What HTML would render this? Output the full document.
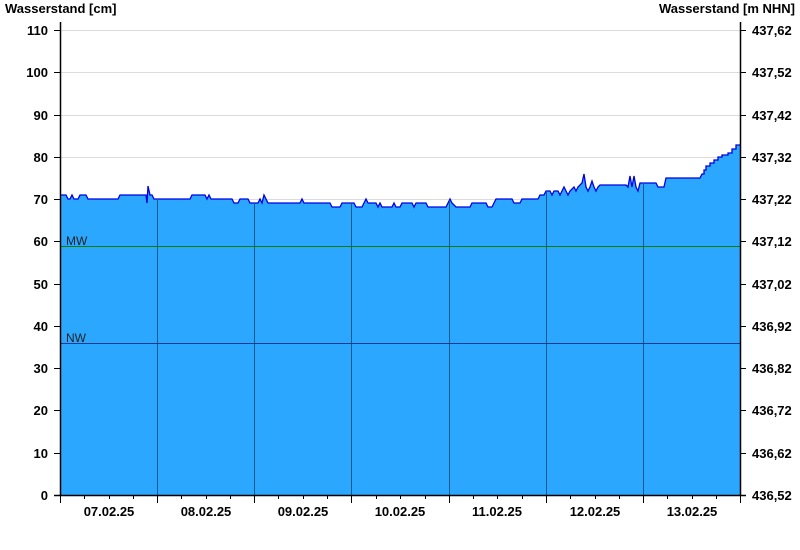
<!DOCTYPE html>
<html><head><meta charset="utf-8"><style>
html,body{margin:0;padding:0;background:#fff;width:800px;height:550px;overflow:hidden}
svg text{font-family:"Liberation Sans",Arial,sans-serif;font-size:13px;font-weight:bold;fill:#000}
</style></head><body>
<svg width="800" height="550" viewBox="0 0 800 550" xmlns="http://www.w3.org/2000/svg">
<defs>
<clipPath id="c"><polygon id="fp" points="60,495 60,195 66,195 68,199 70,199 72,195 74,199 78,199 80,195 86,195 88,199 118,199 120,195 146,195 147,203 148,186 150,195 152,195 154,199 190,199 192,195 205,195 207,199 209,195 211,199 232,199 234,203 238,203 240,199 248,199 250,203 258,203 260,199 262,203 264,195 266,199 268,203 300,203 302,199 304,203 330,203 332,207 340,207 342,203 354,203 356,207 362,207 364,203 366,199 368,203 376,203 378,207 380,203 382,207 392,207 394,203 396,207 400,207 402,203 412,203 414,207 416,203 426,203 428,207 446,207 448,203 450,199 452,203 456,207 470,207 472,203 486,203 488,207 492,207 494,203 496,199 512,199 514,203 520,203 522,199 538,199 540,195 544,195 546,191 550,191 552,195 554,191 558,191 560,195 562,191 564,187 566,191 568,195 570,191 574,187 576,191 578,187 582,183 584,174 586,187 588,191 590,187 592,181 594,187 596,191 598,187 600,185 626,185 628,187 630,176 632,187 634,176 636,187 638,191 640,183 656,183 658,187 664,187 666,178 700,178 702,174 704,174 704,170 706,170 706,166 710,166 710,163 714,163 714,160 718,160 718,157 722,157 722,155 728,155 728,153 732,153 732,149 736,149 736,145 740,145 740,495"/></clipPath>
</defs>
<g stroke="#dcdcdc" stroke-width="1">
<line x1="60" x2="740" y1="30.5" y2="30.5"/><line x1="60" x2="740" y1="72.5" y2="72.5"/><line x1="60" x2="740" y1="115.5" y2="115.5"/><line x1="60" x2="740" y1="157.5" y2="157.5"/><line x1="60" x2="740" y1="199.5" y2="199.5"/>
</g>
<use href="#fp" fill="#2ba7ff"/>
<polyline fill="none" stroke="#0000e0" stroke-width="1.3" points="60,195 66,195 68,199 70,199 72,195 74,199 78,199 80,195 86,195 88,199 118,199 120,195 146,195 147,203 148,186 150,195 152,195 154,199 190,199 192,195 205,195 207,199 209,195 211,199 232,199 234,203 238,203 240,199 248,199 250,203 258,203 260,199 262,203 264,195 266,199 268,203 300,203 302,199 304,203 330,203 332,207 340,207 342,203 354,203 356,207 362,207 364,203 366,199 368,203 376,203 378,207 380,203 382,207 392,207 394,203 396,207 400,207 402,203 412,203 414,207 416,203 426,203 428,207 446,207 448,203 450,199 452,203 456,207 470,207 472,203 486,203 488,207 492,207 494,203 496,199 512,199 514,203 520,203 522,199 538,199 540,195 544,195 546,191 550,191 552,195 554,191 558,191 560,195 562,191 564,187 566,191 568,195 570,191 574,187 576,191 578,187 582,183 584,174 586,187 588,191 590,187 592,181 594,187 596,191 598,187 600,185 626,185 628,187 630,176 632,187 634,176 636,187 638,191 640,183 656,183 658,187 664,187 666,178 700,178 702,174 704,174 704,170 706,170 706,166 710,166 710,163 714,163 714,160 718,160 718,157 722,157 722,155 728,155 728,153 732,153 732,149 736,149 736,145 740,145"/>
<g clip-path="url(#c)" stroke="#1a5a8a" stroke-width="1">
<line x1="157.5" x2="157.5" y1="0" y2="495"/><line x1="254.5" x2="254.5" y1="0" y2="495"/><line x1="351.5" x2="351.5" y1="0" y2="495"/><line x1="449.5" x2="449.5" y1="0" y2="495"/><line x1="546.5" x2="546.5" y1="0" y2="495"/><line x1="643.5" x2="643.5" y1="0" y2="495"/>
</g>
<line x1="60" x2="740" y1="246.5" y2="246.5" stroke="#008000" stroke-width="1"/>
<line x1="60" x2="740" y1="343.5" y2="343.5" stroke="#1a3a8a" stroke-width="1"/>
<text x="66" y="245" style="font-weight:normal;font-size:12px;fill:#222">MW</text>
<text x="66" y="342" style="font-weight:normal;font-size:12px;fill:#222">NW</text>
<g stroke="#000" stroke-width="1.5">
<line x1="60.5" x2="60.5" y1="22" y2="496"/><line x1="740.5" x2="740.5" y1="22" y2="496"/><line x1="54" x2="746" y1="495.5" y2="495.5"/>
</g>
<g stroke="#000" stroke-width="1">
<line x1="54" x2="60" y1="30.5" y2="30.5"/><line x1="54" x2="60" y1="72.5" y2="72.5"/><line x1="54" x2="60" y1="115.5" y2="115.5"/><line x1="54" x2="60" y1="157.5" y2="157.5"/><line x1="54" x2="60" y1="199.5" y2="199.5"/><line x1="54" x2="60" y1="241.5" y2="241.5"/><line x1="54" x2="60" y1="284.5" y2="284.5"/><line x1="54" x2="60" y1="326.5" y2="326.5"/><line x1="54" x2="60" y1="368.5" y2="368.5"/><line x1="54" x2="60" y1="410.5" y2="410.5"/><line x1="54" x2="60" y1="453.5" y2="453.5"/>
<line x1="740" x2="746" y1="30.5" y2="30.5"/><line x1="740" x2="746" y1="72.5" y2="72.5"/><line x1="740" x2="746" y1="115.5" y2="115.5"/><line x1="740" x2="746" y1="157.5" y2="157.5"/><line x1="740" x2="746" y1="199.5" y2="199.5"/><line x1="740" x2="746" y1="241.5" y2="241.5"/><line x1="740" x2="746" y1="284.5" y2="284.5"/><line x1="740" x2="746" y1="326.5" y2="326.5"/><line x1="740" x2="746" y1="368.5" y2="368.5"/><line x1="740" x2="746" y1="410.5" y2="410.5"/><line x1="740" x2="746" y1="453.5" y2="453.5"/>
<line x1="60.5" x2="60.5" y1="495" y2="503"/><line x1="157.5" x2="157.5" y1="495" y2="503"/><line x1="254.5" x2="254.5" y1="495" y2="503"/><line x1="351.5" x2="351.5" y1="495" y2="503"/><line x1="449.5" x2="449.5" y1="495" y2="503"/><line x1="546.5" x2="546.5" y1="495" y2="503"/><line x1="643.5" x2="643.5" y1="495" y2="503"/><line x1="740.5" x2="740.5" y1="495" y2="503"/>
<line x1="84.5" x2="84.5" y1="495" y2="499"/><line x1="109.5" x2="109.5" y1="495" y2="499"/><line x1="133.5" x2="133.5" y1="495" y2="499"/>
<line x1="181.5" x2="181.5" y1="495" y2="499"/><line x1="206.5" x2="206.5" y1="495" y2="499"/><line x1="230.5" x2="230.5" y1="495" y2="499"/>
<line x1="278.5" x2="278.5" y1="495" y2="499"/><line x1="303.5" x2="303.5" y1="495" y2="499"/><line x1="327.5" x2="327.5" y1="495" y2="499"/>
<line x1="376.5" x2="376.5" y1="495" y2="499"/><line x1="400.5" x2="400.5" y1="495" y2="499"/><line x1="425.5" x2="425.5" y1="495" y2="499"/>
<line x1="473.5" x2="473.5" y1="495" y2="499"/><line x1="497.5" x2="497.5" y1="495" y2="499"/><line x1="522.5" x2="522.5" y1="495" y2="499"/>
<line x1="570.5" x2="570.5" y1="495" y2="499"/><line x1="595.5" x2="595.5" y1="495" y2="499"/><line x1="619.5" x2="619.5" y1="495" y2="499"/>
<line x1="667.5" x2="667.5" y1="495" y2="499"/><line x1="692.5" x2="692.5" y1="495" y2="499"/><line x1="716.5" x2="716.5" y1="495" y2="499"/>
</g>
<text x="5" y="13">Wasserstand [cm]</text>
<text x="795" y="13" text-anchor="end">Wasserstand [m NHN]</text>
<g text-anchor="end">
<text x="48" y="35">110</text><text x="48" y="77">100</text><text x="48" y="120">90</text><text x="48" y="162">80</text><text x="48" y="204">70</text><text x="48" y="246">60</text><text x="48" y="289">50</text><text x="48" y="331">40</text><text x="48" y="373">30</text><text x="48" y="415">20</text><text x="48" y="458">10</text><text x="48" y="500">0</text>
</g>
<g>
<text x="752" y="35">437,62</text><text x="752" y="77">437,52</text><text x="752" y="120">437,42</text><text x="752" y="162">437,32</text><text x="752" y="204">437,22</text><text x="752" y="246">437,12</text><text x="752" y="289">437,02</text><text x="752" y="331">436,92</text><text x="752" y="373">436,82</text><text x="752" y="415">436,72</text><text x="752" y="458">436,62</text><text x="752" y="500">436,52</text>
</g>
<g text-anchor="middle">
<text x="109" y="516">07.02.25</text><text x="206" y="516">08.02.25</text><text x="303" y="516">09.02.25</text><text x="400" y="516">10.02.25</text><text x="497" y="516">11.02.25</text><text x="595" y="516">12.02.25</text><text x="692" y="516">13.02.25</text>
</g>
</svg>
</body></html>
